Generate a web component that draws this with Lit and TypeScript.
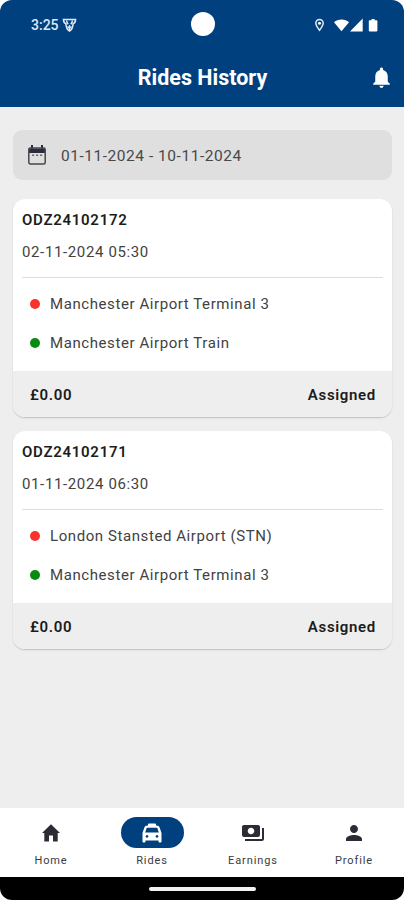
import { LitElement, html, svg, css } from "lit";
import { customElement, property } from "lit/decorators.js";
import { classMap } from "lit/directives/class-map.js";

interface Ride {
  id: string;
  time: string;
  from: string;
  to: string;
  fare: string;
  status: string;
}

const rides: Ride[] = [
  { id: "ODZ24102172", time: "02-11-2024 05:30", from: "Manchester Airport Terminal 3", to: "Manchester Airport Train", fare: "£0.00", status: "Assigned" },
  { id: "ODZ24102171", time: "01-11-2024 06:30", from: "London Stansted Airport (STN)", to: "Manchester Airport Terminal 3", fare: "£0.00", status: "Assigned" },
];

const icons = {
  home: svg`<path d="M10 20.500v-6h4v6h4.700v-8.500h2.300L12 3.300 3 12h2.300v8.500z"/>`,
  taxi: svg`<path fill-rule="evenodd" d="M9 2.500h6q1 0 1 1V4.500h.5c1.600 0 2.700.7 3.200 2.200L21.500 12v8.500q0 1-1 1h-1q-1 0-1-1V19.500h-13v1q0 1-1 1h-1q-1 0-1-1V12L4.300 6.700C4.800 5.200 5.900 4.500 7.500 4.500H8V3.500q0-1 1-1zM7.800 6.700c-.8 0-1.200.3-1.400 1L5.200 11.500h13.600L17.600 7.700c-.2-.7-.6-1-1.400-1zM7 14a1.400 1.400 0 1 0 .01 0zM17 14a1.400 1.400 0 1 0 .01 0z"/>`,
  payments: svg`<path d="M19 14V6c0-1.100-.9-2-2-2H3c-1.100 0-2 .9-2 2v8c0 1.100.9 2 2 2h14c1.100 0 2-.9 2-2zm-9-.7c-1.820 0-3.300-1.480-3.300-3.300s1.480-3.300 3.300-3.300 3.300 1.480 3.300 3.300-1.480 3.300-3.300 3.300zm13-6.300v11c0 1.100-.9 2-2 2H4v-2h17V7h2z"/>`,
  person: svg`<path d="M12 12c2.210 0 4-1.790 4-4s-1.790-4-4-4-4 1.790-4 4 1.790 4 4 4zm0 2c-2.670 0-8 1.340-8 4v2h16v-2c0-2.660-5.330-4-8-4z"/>`,
};

@customElement("ride-card")
class RideCard extends LitElement {
  @property({ attribute: false }) ride!: Ride;

  static styles = css`
    :host {
      display: block;
      height: 218px;
      border-radius: 12px;
      overflow: hidden;
      background: #fff;
      box-shadow: 0 1px 1.500px rgba(0, 0, 0, 0.2);
      color: #424242;
      font-size: 15px;
    }
    .top { height: 172px; padding: 0 9px; box-sizing: border-box; }
    .id { height: 41px; line-height: 42px; font-weight: 600; color: #1d1d1d; letter-spacing: 0.72px; }
    .time { height: 38px; line-height: 24px; letter-spacing: 0.63px; box-sizing: border-box; border-bottom: 1px solid #dedede; }
    .stops { padding-top: 6px; }
    .stop { display: flex; align-items: center; height: 39px; gap: 10px; padding-left: 8px; letter-spacing: 0.58px; }
    .dot { width: 10px; height: 10px; border-radius: 50%; background: #f9322c; }
    .green { background: #078b10; }
    .bottom {
      display: flex; justify-content: space-between; align-items: center;
      height: 46px; padding: 2px 16px 0 17px; box-sizing: border-box; background: #eee;
      color: #1b1b1b; font-weight: 600; letter-spacing: 0.68px;
    }
  `;

  render() {
    const r = this.ride;
    return html`
      <div class="top">
        <div class="id">${r.id}</div>
        <div class="time">${r.time}</div>
        <div class="stops">
          <div class="stop"><span class="dot"></span><span>${r.from}</span></div>
          <div class="stop"><span class="dot green"></span><span>${r.to}</span></div>
        </div>
      </div>
      <div class="bottom"><span>${r.fare}</span><span>${r.status}</span></div>
    `;
  }
}

@customElement("app-root")
class AppRoot extends LitElement {
  static styles = css`
    :host {
      display: block;
      width: 404px;
      height: 900px;
      background: #fff;
      font-family: Roboto, "Liberation Sans", sans-serif;
    }
    .phone { display: flex; flex-direction: column; height: 900px; background: #eee; border-radius: 12px; overflow: hidden; }
    header { height: 107px; background: #01407f; color: #fff; flex: none; }
    .status { display: grid; grid-template-columns: 1fr 24px 1fr; align-items: center; height: 48px; padding-left: 1px; }
    .left { display: flex; align-items: center; gap: 3px; padding-left: 30px; padding-top: 1px; color: #dfe9f5; font-size: 14px; font-weight: 500; }
    .left svg { display: block; }
    .camera { width: 24px; height: 24px; border-radius: 50%; background: #fff; }
    .right { display: flex; align-items: center; justify-content: flex-end; padding-right: 26px; padding-top: 1px; }
    .right svg { display: block; }
    .titlebar { display: grid; grid-template-columns: 46px 1fr 46px; align-items: center; height: 59px; }
    .title { text-align: center; font-size: 21.500px; font-weight: 700; line-height: 59px; padding-left: 1px; }
    .bell { display: block; justify-self: center; }
    main { flex: 1; padding: 23px 12px 0 13px; display: flex; flex-direction: column; }
    .range { display: flex; align-items: center; gap: 13px; height: 50px; box-sizing: border-box; margin-bottom: 19px; padding: 2px 0 0 13px; border-radius: 9px; background: #dfdfdf; color: #484848; font-size: 15.500px; letter-spacing: 0.53px; }
    .range svg { margin-top: -2px; }
    .list { display: flex; flex-direction: column; gap: 14px; }
    nav { flex: none; height: 69px; display: grid; grid-template-columns: repeat(4, 101px); background: #fff; }
    .tab { display: flex; flex-direction: column; align-items: center; padding: 9px 0 0 1px; color: #3b3b40; font-size: 11px; letter-spacing: 0.9px; }
    .pill { display: flex; align-items: center; justify-content: center; width: 63px; height: 31px; border-radius: 16px; margin-bottom: 6px; }
    .pill svg { display: block; fill: #2d2c35; }
    .active .pill { background: #01407f; }
    .active .pill svg { fill: #fff; }
    .gesture { flex: none; height: 23px; display: flex; justify-content: center; align-items: center; background: #000; }
    .bar { width: 107px; height: 4px; border-radius: 2px; background: #f2f2f2; }
  `;

  private tab(label: string, icon: unknown, active = false) {
    return html`<div class=${classMap({ tab: true, active })}>
      <div class="pill"><svg width="24" height="24" viewBox="0 0 24 24">${icon}</svg></div>
      <span>${label}</span>
    </div>`;
  }

  render() {
    return html`
      <div class="phone">
        <header>
          <div class="status">
            <div class="left">
              <span>3:25</span>
              <svg width="15" height="14" viewBox="0 0 14 14" fill="none" stroke="#dfe9f5" stroke-width="1.600">
                <path d="M1 1.500h12c0 2-.8 3.600-2.400 4.300C10.400 9.500 9 12 7 13 5 12 3.600 9.500 3.400 5.800 1.800 5.100 1 3.500 1 1.500z"/>
                <path d="M4 2.500c.3 2 1 3 1.700 3.700M10 2.500c-.3 2-1 3-1.700 3.700"/>
                <path d="M7 7v5M5 8.500l2 2 2-2" stroke-width="1.300"/>
              </svg>
            </div>
            <div class="camera"></div>
            <div class="right">
              <svg width="64" height="16" viewBox="0 0 64 16" fill="#fff">
                <path d="M5.500 2.400a3.700 3.700 0 0 0-3.700 3.700c0 2.600 3.700 7.200 3.700 7.200s3.700-4.600 3.700-7.200a3.700 3.700 0 0 0-3.700-3.700z" fill="none" stroke="#dfe9f5" stroke-width="1.500"/>
                <circle cx="5.500" cy="6.200" r="1.500"/>
                <path d="M20 5.300C24 1.500 31 1.500 35 5.300L27.500 14.200z"/>
                <path d="M48.700 1.600v12.800H36z"/>
                <path d="M55.600 3.300h1.900V2h3.200v1.300h1.900q.8 0 .8.800v9.500q0 .8-.8.800h-7q-.8 0-.8-.8V4.100q0-.8.8-.8z"/>
              </svg>
            </div>
          </div>
          <div class="titlebar">
            <span></span>
            <div class="title">Rides History</div>
            <svg class="bell" width="25" height="25" viewBox="0 0 24 24" fill="#fff"><path d="M12 22c1.100 0 2-.9 2-2h-4c0 1.100.9 2 2 2zm6-6v-5c0-3.070-1.630-5.640-4.500-6.320V4c0-.83-.67-1.500-1.500-1.500s-1.500.67-1.500 1.500v.68C7.640 5.360 6 7.920 6 11v5l-2 2v1h16v-1l-2-2z"/></svg>
          </div>
        </header>
        <main>
          <div class="range">
            <svg width="22" height="24" viewBox="0 0 22 24">
              <path d="M3 5.500h16v4.500H3z" fill="#2b2d3d"/>
              <path d="M6 2v4M16 2v4" stroke="#2b2d3d" stroke-width="2"/>
              <rect x="2.800" y="5" width="16.400" height="16" rx="1.500" fill="none" stroke="#45464f" stroke-width="1.500"/>
              <path d="M6 12.300h2.200M10 12.300h2.200M14 12.300h2.200" stroke="#6b6b72" stroke-width="1.600"/>
            </svg>
            <span>01-11-2024 - 10-11-2024</span>
          </div>
          <div class="list">${rides.map((ride) => html`<ride-card .ride=${ride}></ride-card>`)}</div>
        </main>
        <nav>
          ${this.tab("Home", icons.home)}
          ${this.tab("Rides", icons.taxi, true)}
          ${this.tab("Earnings", icons.payments)}
          ${this.tab("Profile", icons.person)}
        </nav>
        <div class="gesture"><div class="bar"></div></div>
      </div>
    `;
  }
}
